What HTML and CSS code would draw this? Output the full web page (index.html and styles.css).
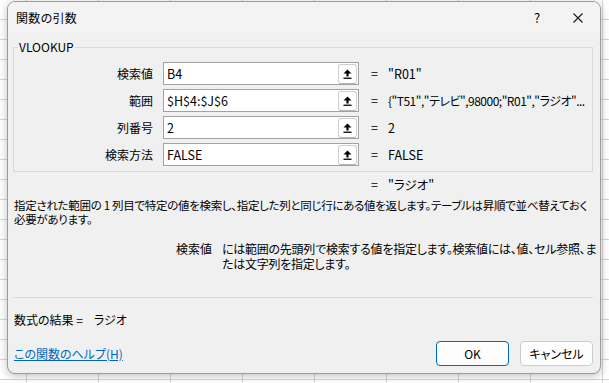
FILE: index.html
```html
<!DOCTYPE html>
<html lang="ja">
<head>
  <meta charset="UTF-8">
  <title>関数の引数</title>
  <link rel="stylesheet" href="styles.css">
</head>
<body>
  <div class="dialog">
    <div class="titlebar">
      <span class="title">関数の引数</span>
      <span class="help-btn">?</span>
      <span class="close-btn">
        <svg width="10" height="10" viewBox="0 0 10 10"><path d="M0.5 0.5 L9.5 9.5 M9.5 0.5 L0.5 9.5" stroke="#1a1a1a" stroke-width="1.1" fill="none"/></svg>
      </span>
    </div>

    <div class="content">
      <fieldset class="args">
        <legend>VLOOKUP</legend>
        <div class="arg-grid">
          <label>検索値</label>
          <div class="ref-input"><span class="ref-text">B4</span><span class="ref-btn"><svg width="9" height="10" viewBox="0 0 9 10"><path d="M4.5 0.5 L8.5 4.5 H5.6 V7.5 H3.4 V4.5 H0.5 Z" fill="#000"/><rect x="0.5" y="8.6" width="8" height="1.3" fill="#000"/></svg></span></div>
          <div class="arg-value"><span class="eq">=</span>"R01"</div>

          <label>範囲</label>
          <div class="ref-input"><span class="ref-text">$H$4:$J$6</span><span class="ref-btn"><svg width="9" height="10" viewBox="0 0 9 10"><path d="M4.5 0.5 L8.5 4.5 H5.6 V7.5 H3.4 V4.5 H0.5 Z" fill="#000"/><rect x="0.5" y="8.6" width="8" height="1.3" fill="#000"/></svg></span></div>
          <div class="arg-value"><span class="eq">=</span><span class="long-val">{"T51","テレビ",98000;"R01","ラジオ"...</span></div>

          <label>列番号</label>
          <div class="ref-input"><span class="ref-text">2</span><span class="ref-btn"><svg width="9" height="10" viewBox="0 0 9 10"><path d="M4.5 0.5 L8.5 4.5 H5.6 V7.5 H3.4 V4.5 H0.5 Z" fill="#000"/><rect x="0.5" y="8.6" width="8" height="1.3" fill="#000"/></svg></span></div>
          <div class="arg-value"><span class="eq">=</span>2</div>

          <label>検索方法</label>
          <div class="ref-input"><span class="ref-text">FALSE</span><span class="ref-btn"><svg width="9" height="10" viewBox="0 0 9 10"><path d="M4.5 0.5 L8.5 4.5 H5.6 V7.5 H3.4 V4.5 H0.5 Z" fill="#000"/><rect x="0.5" y="8.6" width="8" height="1.3" fill="#000"/></svg></span></div>
          <div class="arg-value"><span class="eq">=</span>FALSE</div>
        </div>
      </fieldset>

      <div class="func-result"><span class="eq">=</span>"ラジオ"</div>

      <p class="func-desc">指定された範囲の 1 列目で特定の値を検索し、指定した列と同じ行にある値を返します。テーブルは昇順で並べ替えておく<br>必要があります。</p>

      <div class="arg-desc">
        <span class="arg-name">検索値</span>
        <p>には範囲の先頭列で検索する値を指定します。検索値には、値、セル参照、ま<br>たは文字列を指定します。</p>
      </div>

      <div class="formula-result">数式の結果 =<span class="result-val">ラジオ</span></div>

      <div class="footer">
        <a href="#" class="help-link">この関数のヘルプ(H)</a>
        <div class="buttons">
          <button class="btn default">OK</button>
          <button class="btn">キャンセル</button>
        </div>
      </div>
    </div>
  </div>
</body>
</html>
```

FILE: styles.css
```css
body {
  margin: 0;
  padding: 1px 0 0 7px;
  height: 383px;
  box-sizing: border-box;
  overflow: hidden;
  background-color: #fff;
  background-image:
    repeating-linear-gradient(90deg, transparent 0 26px, #d6d6d6 26px 27px, transparent 27px 72px),
    repeating-linear-gradient(180deg, transparent 0 19px, #d6d6d6 19px 20px);
  font-family: "Noto Sans CJK JP", sans-serif;
  font-size: 12px;
  color: #000;
  font-feature-settings: "palt";
}
.dialog {
  width: 594px;
  height: 373px;
  box-sizing: border-box;
  border: 1px solid #9c9c9c;
  border-radius: 8px;
  background: #f0f0f0;
  box-shadow: 0 2px 8px rgba(0, 0, 0, 0.25);
  display: flex;
  flex-direction: column;
  overflow: hidden;
}
.titlebar {
  height: 31px;
  flex: none;
  display: flex;
  align-items: center;
  padding-left: 8px;
  background: #f3f3f3;
}
.title {
  flex: 1;
  font-size: 12px;
  letter-spacing: 0.3px;
}
.help-btn {
  width: 20px;
  text-align: center;
  font-size: 13px;
  margin-right: 26px;
}
.close-btn {
  width: 10px;
  height: 10px;
  margin-right: 17px;
  display: flex;
}
.content {
  flex: 1;
  display: flex;
  flex-direction: column;
  padding: 0 7px 7px 5px;
}
.args {
  margin: 6px 0 0;
  padding: 7px 0 5px;
  border: 1px solid #dadada;
  min-width: 0;
}
.args legend {
  padding: 0 1px;
  margin-left: 4px;
  line-height: 16px;
  font-size: 12px;
}
.arg-grid {
  display: grid;
  grid-template-columns: 139px 196px 1fr;
  grid-auto-rows: 23px;
  row-gap: 4px;
  column-gap: 10px;
  align-items: center;
}
.arg-grid label {
  text-align: right;
}
.ref-input {
  height: 23px;
  box-sizing: border-box;
  border: 1px solid #a2a2a2;
  background: #fff;
  display: flex;
  align-items: center;
  padding: 0 1px 0 3px;
}
.ref-text {
  flex: 1;
  font-size: 12.5px;
}
.ref-btn {
  width: 19px;
  height: 20px;
  box-sizing: border-box;
  border: 1px solid #cfcfcf;
  border-bottom-color: #b5b5b5;
  border-radius: 3px;
  background: #fff;
  display: flex;
  align-items: center;
  justify-content: center;
}
.arg-value {
  padding-left: 2px;
  white-space: nowrap;
  font-size: 12.5px;
}
.long-val {
  font-size: 12px;
  letter-spacing: -0.5px;
}
.eq {
  display: inline-block;
  width: 17px;
}
.func-result {
  margin: 5px 0 0 358px;
  line-height: 16px;
  font-size: 12.5px;
}
.func-desc {
  margin: 5px 0 0 1px;
  line-height: 14px;
  white-space: nowrap;
  font-size: 11.5px;
  letter-spacing: -0.3px;
}
.arg-desc {
  display: flex;
  margin-top: 15px;
  line-height: 15px;
}
.arg-name {
  width: 209px;
  flex: none;
  text-align: right;
  padding-right: 10px;
  box-sizing: border-box;
}
.arg-desc p {
  margin: 0;
  white-space: nowrap;
  letter-spacing: -0.25px;
}
.formula-result {
  margin-top: auto;
  border-top: 1px solid #dadada;
  padding: 14px 0 0 1px;
  line-height: 16px;
}
.result-val {
  margin-left: 11px;
}
.footer {
  display: flex;
  align-items: center;
  margin-top: 13px;
}
.help-link {
  flex: 1;
  color: #0067c0;
  padding-left: 1px;
}
.buttons {
  display: flex;
  gap: 11px;
}
.btn {
  width: 73px;
  height: 25px;
  border: 1px solid #cccccc;
  border-radius: 4px;
  background: #fdfdfd;
  font-family: inherit;
  font-size: 12px;
  font-feature-settings: "palt";
  color: #000;
  padding: 0;
}
.btn.default {
  border-color: #0067c0;
}
```
